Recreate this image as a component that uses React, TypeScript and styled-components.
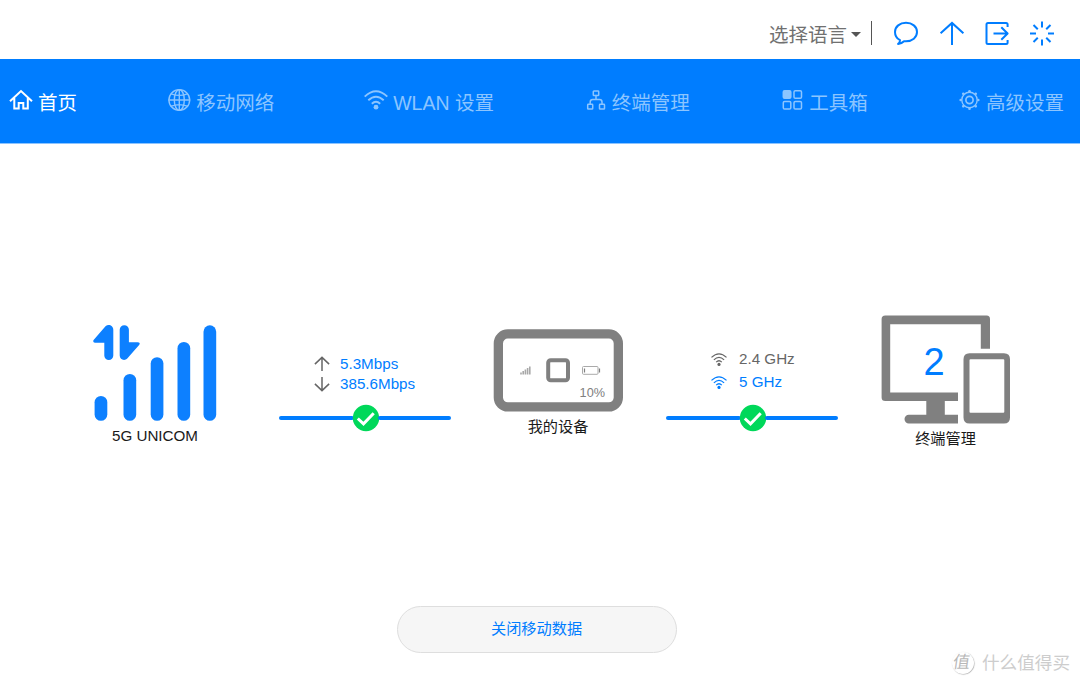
import React from "react";
import styled, { createGlobalStyle } from "styled-components";

const BLUE = "#007dff";
const GRAY = "#808080";

const GlobalStyle = createGlobalStyle`
  * { box-sizing: border-box; }
  body {
    margin: 0;
    background: #fff;
    font-family: "Liberation Sans", "Noto Sans CJK SC", sans-serif;
    color: #1a1a1a;
  }
  svg { display: block; flex: none; }
`;

const Page = styled.div`
  position: relative;
  display: flex;
  flex-direction: column;
  width: 1080px;
  height: 685px;
  overflow: hidden;
`;

const TopBar = styled.header`
  display: flex;
  align-items: center;
  justify-content: flex-end;
  height: 59px;
  padding: 7px 25px 0 0;
`;

const Language = styled.button`
  display: flex;
  align-items: center;
  gap: 4px;
  padding: 4px 0 0;
  border: 0;
  background: none;
  color: #707070;
  font: inherit;
  font-size: 19.5px;
  line-height: 26px;
`;

const Caret = styled.span`
  margin-bottom: 2px;
  border: 5px solid transparent;
  border-top-color: #555;
  border-bottom: 0;
`;

const Divider = styled.span`
  width: 1.5px;
  height: 24px;
  margin: 0 21px 1px 10px;
  background: #555;
`;

const Tools = styled.div`
  display: flex;
  gap: 19.2px;
  color: ${BLUE};
`;

const Nav = styled.nav`
  display: flex;
  justify-content: space-between;
  align-items: center;
  height: 85px;
  padding: 1px 16px 0 9px;
  background: ${BLUE};
  border-bottom: 1px solid #8cc4ff;
`;

const NavItem = styled.a<{ $active?: boolean; $gap?: number; $shift?: number }>`
  display: flex;
  align-items: center;
  gap: ${(p) => p.$gap ?? 5}px;
  margin: 0 ${(p) => p.$shift ?? 0}px 0 ${(p) => -(p.$shift ?? 0)}px;
  color: ${(p) => (p.$active ? "#fff" : "#8cc5ff")};
  font-size: 19.5px;
  line-height: 28px;
  white-space: nowrap;
  svg { margin-bottom: 3px; }
  span { padding-top: 2px; }
`;

const Stage = styled.main`
  display: grid;
  grid-template-columns: 210px 209px 178px 210px 177px;
  align-items: start;
  height: 462px;
  padding-left: 50px;
`;

const Column = styled.section<{ $top: number }>`
  display: flex;
  flex-direction: column;
  align-items: center;
  padding-top: ${(p) => p.$top}px;
`;

const Label = styled.div<{ $gap?: number }>`
  margin-top: ${(p) => p.$gap ?? 5}px;
  font-size: 15.2px;
  line-height: 20px;
`;

const Stats = styled.div<{ $indent: number }>`
  width: 172px;
  padding-left: ${(p) => p.$indent}px;
`;

const StatRow = styled.div<{ $color?: string; $height: number; $gap: number }>`
  display: flex;
  align-items: center;
  gap: ${(p) => p.$gap}px;
  height: ${(p) => p.$height}px;
  font-size: 15.2px;
  color: ${(p) => p.$color ?? BLUE};
`;

const StatValue = styled.span`
  padding-bottom: 2px;
`;

const Link = styled.div`
  display: flex;
  align-items: center;
  width: 172px;
  height: 28px;
  margin-top: 10px;
`;

const Wire = styled.span`
  flex: 1;
  height: 4.5px;
  margin: 0 -2px;
  border-radius: 2px;
  background: ${BLUE};
  &:first-child { flex: 1.03; margin-left: 0; }
  &:last-child { margin-right: 0; }
`;

const Picture = styled.div`
  position: relative;
`;

const Battery = styled.span`
  position: absolute;
  right: 18px;
  bottom: 11px;
  font-size: 12.7px;
  line-height: 16px;
  color: ${GRAY};
`;

const ClientCount = styled.span`
  position: absolute;
  left: 43px;
  top: 26px;
  font-size: 38px;
  line-height: 42px;
  color: ${BLUE};
`;

const DataButton = styled.button`
  align-self: center;
  width: 280px;
  height: 47px;
  margin-right: 6px;
  padding: 0 1px 1px 0;
  border: 1px solid #dedede;
  border-radius: 24px;
  background: #f6f6f6;
  color: ${BLUE};
  font: inherit;
  font-size: 15.2px;
  line-height: 20px;
`;

const Watermark = styled.div`
  position: absolute;
  right: 10px;
  bottom: 9px;
  display: flex;
  align-items: center;
  gap: 8px;
  color: #cdcdcd;
  font-size: 17.6px;
  line-height: 26px;
`;

const Seal = styled.span`
  width: 22px;
  height: 22px;
  border-radius: 50%;
  box-shadow: 0.5px 0.5px 1px #aaa;
  color: #b8b8b8;
  font-size: 17px;
  line-height: 22px;
  padding-right: 3px;
  text-align: center;
  span { display: inline-block; transform: skewX(-8deg); line-height: 22px; }
`;

const Line = (p: React.SVGProps<SVGSVGElement>) => (
  <svg fill="none" stroke="currentColor" strokeWidth={2} strokeLinecap="round" strokeLinejoin="round" {...p} />
);

const ChatIcon = () => (
  <Line width={26} height={26} viewBox="0 0 26 26">
    <path d="M7 20.200C3.800 18.600 2 15.500 2 12 2 6.600 6.800 2.800 13 2.800S24 6.600 24 12s-4.800 9.300-11 9.300H11C9.500 22.900 7.300 23.700 5.100 23.900 6.500 22.900 7 21.600 7 20.200Z" />
  </Line>
);

const ArrowIcon = () => (
  <Line width={26} height={26} viewBox="0 0 26 26" strokeLinecap="butt">
    <path d="M13 25V3M1.600 13.300 13 2.900 24.400 13.300" strokeLinejoin="miter" />
  </Line>
);

const LogoutIcon = () => (
  <Line width={26} height={26} viewBox="0 0 26 26" strokeLinecap="butt">
    <path d="M23.600 7V4.500Q23.600 3 22.100 3H4Q2.500 3 2.500 4.500V22.500Q2.500 24 4 24H22.100Q23.600 24 23.600 22.500V20M9.500 13.500H23M17.300 7.200 23.600 13.500 17.300 19.800" />
  </Line>
);

const SpinnerIcon = () => (
  <Line width={26} height={26} viewBox="0 0 26 26" strokeLinecap="butt">
    {[0, 45, 90, 135, 180, 225, 270, 315].map((a) => (
      <path key={a} d="M13 1.500V7.500" transform={`rotate(${a} 13 13.500)`} />
    ))}
  </Line>
);

const HomeIcon = () => (
  <Line width={24} height={22} viewBox="0 0 24 22" strokeLinecap="butt" strokeLinejoin="miter">
    <path d="M1 12.300 12 2 23 12.300M5.300 9V19.500H9.700V14H14.300V19.500H18.800V9" />
  </Line>
);

const GlobeIcon = () => (
  <Line width={23} height={24} viewBox="0 0 23 24" strokeWidth={1.400}>
    <circle cx="11.300" cy="12" r="10.400" />
    <ellipse cx="11.300" cy="12" rx="5" ry="10.400" />
    <path d="M11.300 1.600V22.400M.9 12H21.700M3.300 5.800Q11.300 9 19.300 5.800M3.300 18.200Q11.300 15 19.300 18.200" />
  </Line>
);

const WifiIcon = ({ small }: { small?: boolean }) => (
  <Line width={small ? 16 : 24} height={small ? 13.300 : 20} viewBox="0 0 24 20" strokeWidth={1.900} strokeLinecap="butt">
    <path d="M.7 6.600Q12-4.200 23.300 6.600M4.300 10.300Q12 3 19.700 10.300M7.800 13.700Q12 9.700 16.200 13.700" />
    <circle cx="12" cy="17.200" r="2.400" fill="currentColor" stroke="none" />
  </Line>
);

const TreeIcon = () => (
  <Line width={20} height={22} viewBox="0 0 20 22" strokeWidth={1.500}>
    <rect x="7.300" y="2" width="5.400" height="4.600" rx=".7" />
    <rect x="1.700" y="15.300" width="5" height="4.800" rx=".7" />
    <rect x="13.500" y="15.300" width="5" height="4.800" rx=".7" />
    <path d="M10 6.600V10.500M4.200 15V13Q4.200 10.500 6.700 10.500H13.500Q16 10.500 16 13V15" />
  </Line>
);

const TilesIcon = () => (
  <Line width={21} height={22} viewBox="0 0 21 22" strokeWidth={1.500}>
    <rect x="1.300" y="1.800" width="7.500" height="7.500" rx="1.300" fill="currentColor" />
    <rect x="12" y="1.800" width="7.500" height="7.500" rx="1.300" />
    <rect x="1.300" y="12.500" width="7.500" height="7.500" rx="1.300" />
    <rect x="12" y="12.500" width="7.500" height="7.500" rx="1.300" />
  </Line>
);

const GearIcon = () => (
  <Line width={21} height={22} viewBox="0 0 21 22" strokeWidth={1.400}>
    <circle cx="10.500" cy="11" r="3.600" strokeWidth={1.700} />
    <circle cx="10.500" cy="11" r="7.700" />
    {[0, 45, 90, 135, 180, 225, 270, 315].map((a) => (
      <circle key={a} cx="10.500" cy="2.200" r="1.300" fill="currentColor" stroke="none" transform={`rotate(${a} 10.500 11)`} />
    ))}
  </Line>
);

const RateArrow = ({ down }: { down?: boolean }) => (
  <Line width={16} height={16} viewBox="0 0 16 16" color="#666" strokeWidth={1.500} strokeLinecap="butt" strokeLinejoin="miter">
    <path d={down ? "M8 1V14.500M.9 7.900 8 14.600 15.100 7.900" : "M8 15V1.500M.9 8.100 8 1.400 15.100 8.100"} />
  </Line>
);

const CheckBadge = () => (
  <svg width={28} height={28} viewBox="0 0 28 28">
    <circle cx="14" cy="14" r="13.200" fill="#00d85a" />
    <path d="M5.800 14.500 11.500 19.800 21.700 9.200" fill="none" stroke="#fff" strokeWidth={3} />
  </svg>
);

const Connection = () => (
  <Link>
    <Wire />
    <CheckBadge />
    <Wire />
  </Link>
);

const bars = [
  { x: 1.600, y: 71 },
  { x: 30.500, y: 49 },
  { x: 57.700, y: 32.200 },
  { x: 84.500, y: 16.900 },
  { x: 110.500, y: 0.300 },
];

const SignalPicture = () => (
  <svg width={124} height={97} viewBox="0 0 124 97" fill="#0d80ff">
    {bars.map((b) => (
      <rect key={b.x} x={b.x} y={b.y} width={12.700} height={95.800 - b.y} rx={6.350} />
    ))}
    <path d="M12.500 1.200C15.500-1.300 20.300.5 20.300 4.700V30.500A4.500 4.500 0 0 1 11.300 30.500V17.700H2C.3 17.700-.4 16 .8 14.700Z" />
    <path d="M26.700 4.800A4.600 4.600 0 0 1 35.900 4.800V17.300H44.500C46.800 17.300 47.300 18.700 46.100 20L34.500 33.300C31.500 36.500 26.700 34.500 26.700 30.500Z" />
  </svg>
);

const DevicePicture = () => (
  <svg width={130} height={83} viewBox="0 0 130 83">
    <rect x="5.350" y="4.950" width="120" height="73" rx="9.500" fill="none" stroke={GRAY} strokeWidth={9.300} />
    <rect x="55.200" y="31.300" width="19.800" height="20" rx="2.500" fill="none" stroke={GRAY} strokeWidth={4} />
    <path d="M28 45.500V43.500M30.200 45.500V42M32.400 45.500V40.500M34.600 45.500V39M36.800 45.500V37.500" stroke="#a8a8a8" strokeWidth={1.600} />
    <rect x="89.500" y="37.500" width="15.500" height="7.800" rx="1" fill="none" stroke="#aaa" />
    <path d="M106.500 39.500V43.500M91.500 39.500V43.500" stroke={GRAY} strokeWidth={1.200} />
  </svg>
);

const ClientsPicture = () => (
  <svg width={130} height={109} viewBox="0 0 130 109" fill={GRAY}>
    <path d="M4.300.5H105.700Q109 .5 109 4V33.800H99.800V9.200H9.200V77.500H77V86H63.800V99.800H77V108.400H27.800A4.300 4.300 0 0 1 27.800 99.800H45.300V86H4.300Q.6 86 .6 82.500V4Q.6.5 4.300.5Z" />
    <path fillRule="evenodd" d="M88.500 38.300H123Q129 38.300 129 44.300V102.400Q129 108.400 123 108.400H88.500Q82.500 108.400 82.500 102.400V44.300Q82.500 38.300 88.500 38.300ZM89.500 44.200Q88.500 44.200 88.500 45.200V96.700Q88.500 97.700 89.500 97.700H122.300Q123.300 97.700 123.300 96.700V45.200Q123.300 44.200 122.300 44.200Z" />
  </svg>
);

export default function App() {
  return (
    <Page>
      <GlobalStyle />
      <TopBar>
        <Language>
          选择语言
          <Caret />
        </Language>
        <Divider />
        <Tools>
          <ChatIcon />
          <ArrowIcon />
          <LogoutIcon />
          <SpinnerIcon />
        </Tools>
      </TopBar>
      <Nav>
        <NavItem $active><HomeIcon /><span>首页</span></NavItem>
        <NavItem><GlobeIcon /><span>移动网络</span></NavItem>
        <NavItem $gap={5} $shift={1.5}><WifiIcon /><span>WLAN 设置</span></NavItem>
        <NavItem $gap={6} $shift={1}><TreeIcon /><span>终端管理</span></NavItem>
        <NavItem $gap={6}><TilesIcon /><span>工具箱</span></NavItem>
        <NavItem $gap={6}><GearIcon /><span>高级设置</span></NavItem>
      </Nav>
      <Stage>
        <Column $top={181}>
          <SignalPicture />
          <Label $gap={4}>5G UNICOM</Label>
        </Column>
        <Column $top={210}>
          <Stats $indent={35}>
            <StatRow $height={20} $gap={10.500}><RateArrow /><StatValue>5.3Mbps</StatValue></StatRow>
            <StatRow $height={20} $gap={10.500}><RateArrow down /><StatValue>385.6Mbps</StatValue></StatRow>
          </Stats>
          <Connection />
        </Column>
        <Column $top={185}>
          <Picture>
            <DevicePicture />
            <Battery>10%</Battery>
          </Picture>
          <Label>我的设备</Label>
        </Column>
        <Column $top={204}>
          <Stats $indent={45}>
            <StatRow $height={23} $gap={12} $color="#666"><WifiIcon small /><StatValue>2.4 GHz</StatValue></StatRow>
            <StatRow $height={23} $gap={12}><WifiIcon small /><StatValue>5 GHz</StatValue></StatRow>
          </Stats>
          <Connection />
        </Column>
        <Column $top={171}>
          <Picture>
            <ClientsPicture />
            <ClientCount>2</ClientCount>
          </Picture>
          <Label>终端管理</Label>
        </Column>
      </Stage>
      <DataButton>关闭移动数据</DataButton>
      <Watermark>
        <Seal><span>值</span></Seal>
        什么值得买
      </Watermark>
    </Page>
  );
}
